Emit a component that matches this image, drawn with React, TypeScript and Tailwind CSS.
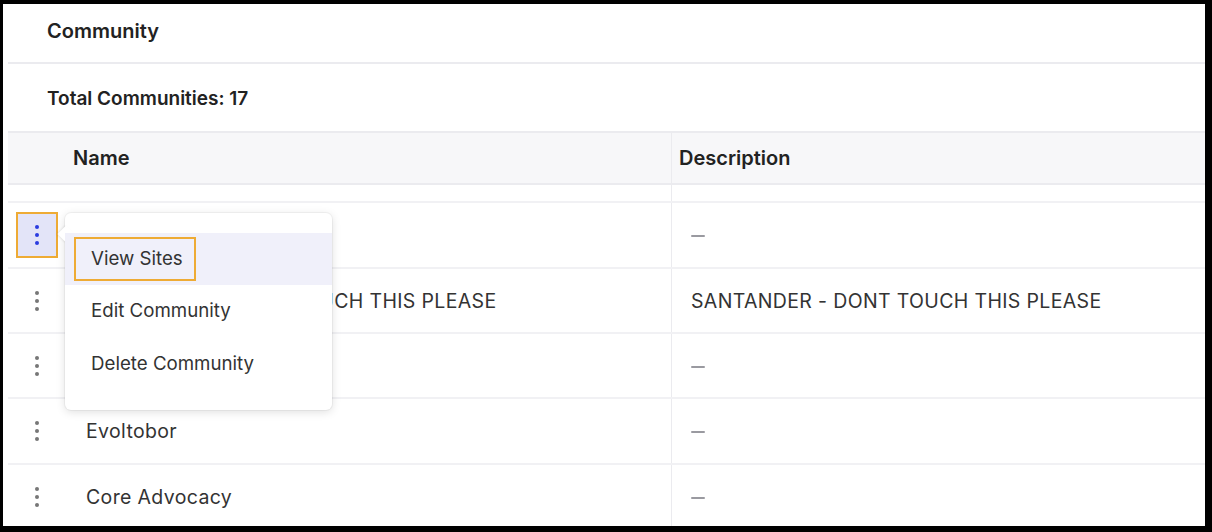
import React from 'react';

type Row = { name: string; description: string; h: string };

// names of rows 1 and 3 sit under the open menu
const rows: Row[] = [
  { name: '', description: '', h: 'h-[66px]' },
  { name: 'SANTANDER - DONT TOUCH THIS PLEASE', description: 'SANTANDER - DONT TOUCH THIS PLEASE', h: 'h-[65px]' },
  { name: '', description: '', h: 'h-[65px]' },
  { name: 'Evoltobor', description: '', h: 'h-[66px]' },
  { name: 'Core Advocacy', description: '', h: 'h-[66px]' },
];

const Kebab = ({ active }: { active?: boolean }) => (
  <div className={`flex flex-col items-center gap-[4px] ${active ? 'text-[#2b3be0]' : 'text-[#777]'}`}>
    <span className="w-[4px] h-[4px] rounded-full bg-current" />
    <span className="w-[4px] h-[4px] rounded-full bg-current" />
    <span className="w-[4px] h-[4px] rounded-full bg-current" />
  </div>
);

const Dash = () => <span className="block w-[14px] h-[2px] bg-[#9a9aa0] rounded-sm" />;

const RowMenu = () => (
  <div className="absolute left-[57px] top-[10px] z-10 w-[267px] rounded-[6px] bg-white py-[20px] text-[18.7px] shadow-[0_2px_10px_rgba(0,0,0,0.13),0_0_0_1px_rgba(0,0,0,0.04)]">
    {/* caret */}
    <span className="absolute -left-[5px] top-[15px] w-[12px] h-[12px] rotate-45 bg-white shadow-[-1px_1px_2px_rgba(0,0,0,0.08)]" />
    <div className="relative h-[52px] flex items-center bg-[#f0f0fa] pl-[9px]">
      <span className="pl-[15px] pr-[11px] py-[6px] border-2 border-[#eeab35]">View Sites</span>
    </div>
    <div className="h-[53px] flex items-center pl-[26px]">Edit Community</div>
    <div className="h-[52px] flex items-center pl-[26px]">Delete Community</div>
  </div>
);

export default function App() {
  return (
    <div
      className="w-[1212px] h-[532px] bg-black pl-[3px] pt-[4px] pr-[7px] pb-[6px]"
      style={{ fontFamily: 'Inter, "Noto Sans", sans-serif' }}
    >
      <div className="h-full bg-white pl-[5px] overflow-hidden flex flex-col text-[#333]">
        <div className="h-[60px] shrink-0 flex items-center pl-[39px] pb-[4px] border-b-2 border-[#ebebef] text-[20px] font-semibold text-[#222]">
          Community
        </div>
        <div className="h-[69px] shrink-0 flex items-center pl-[39px] pt-[4px] border-b-2 border-[#ebebef] text-[19px] font-semibold text-[#222]">
          Total Communities: 17
        </div>

        <div className="grid grid-cols-[57px_607px_1fr] h-[52px] shrink-0 bg-[#f7f7f9] border-b-2 border-[#ebebef] text-[20px] font-semibold text-[#222]">
          <div />
          <div className="flex items-center pl-[8px] border-r border-[#ebebef]">Name</div>
          <div className="flex items-center pl-[7px]">Description</div>
        </div>

        <div className="grid grid-cols-[57px_607px_1fr] h-[18px] shrink-0 border-b-2 border-[#f1f1f4]">
          <div />
          <div className="border-r border-[#ebebef]" />
          <div />
        </div>

        {rows.map((r, i) => (
          <div
            key={i}
            className={`relative grid grid-cols-[57px_607px_1fr] ${r.h} shrink-0 border-b-2 border-[#f1f1f4] text-[19.5px]`}
          >
            <div className="flex items-center justify-center pl-[1px]">
              {i === 0 ? (
                <div className="w-[42px] h-[46px] border-2 border-[#eeab35] bg-[#e3e4f8] flex items-center justify-center">
                  <Kebab active />
                </div>
              ) : (
                <Kebab />
              )}
            </div>
            <div className="flex items-center pl-[21px] pt-[2px] border-r border-[#ebebef] whitespace-nowrap tracking-[0.35px]">
              {r.name}
            </div>
            <div className="flex items-center pl-[19px] pt-[2px] whitespace-nowrap tracking-[0.35px]">
              {r.description ? r.description : <Dash />}
            </div>
            {i === 0 && <RowMenu />}
          </div>
        ))}
      </div>
    </div>
  );
}
